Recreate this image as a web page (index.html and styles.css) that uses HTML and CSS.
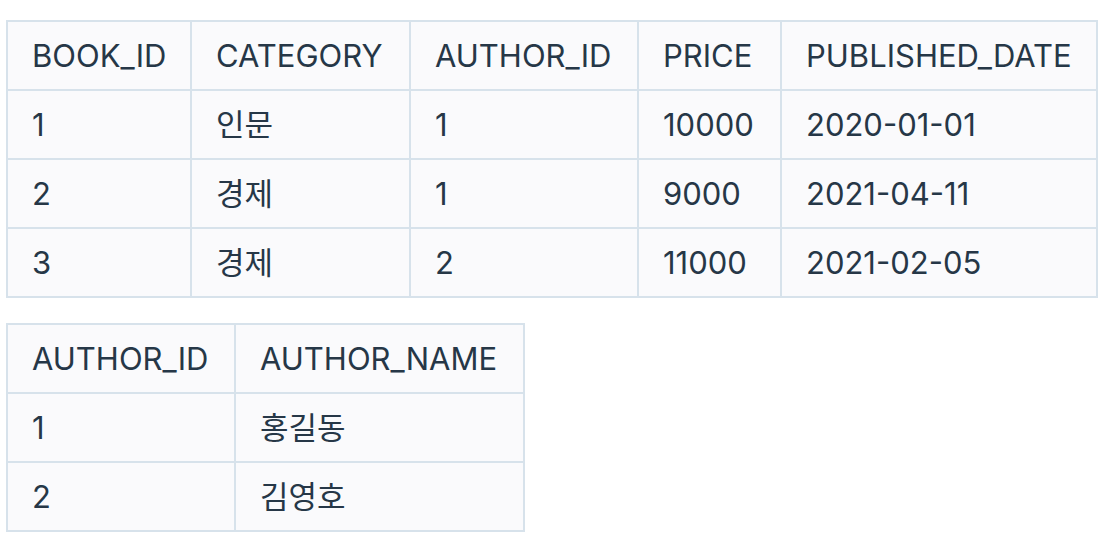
FILE: index.html
```html
<!DOCTYPE html>
<html lang="ko">
<head>
<meta charset="utf-8">
<link rel="stylesheet" href="styles.css">
</head>
<body>
<div class="page">
  <table class="grid grid-books">
    <colgroup>
      <col class="c-bookid"><col class="c-category"><col class="c-authorid"><col class="c-price"><col class="c-date">
    </colgroup>
    <thead>
      <tr><th>BOOK_ID</th><th>CATEGORY</th><th>AUTHOR_ID</th><th>PRICE</th><th>PUBLISHED_DATE</th></tr>
    </thead>
    <tbody>
      <tr><td>1</td><td>인문</td><td>1</td><td>10000</td><td>2020-01-01</td></tr>
      <tr><td>2</td><td>경제</td><td>1</td><td>9000</td><td>2021-04-11</td></tr>
      <tr><td>3</td><td>경제</td><td>2</td><td>11000</td><td>2021-02-05</td></tr>
    </tbody>
  </table>
  <table class="grid grid-authors">
    <colgroup>
      <col class="c-aid"><col class="c-aname">
    </colgroup>
    <thead>
      <tr><th>AUTHOR_ID</th><th>AUTHOR_NAME</th></tr>
    </thead>
    <tbody>
      <tr><td>1</td><td>홍길동</td></tr>
      <tr><td>2</td><td>김영호</td></tr>
    </tbody>
  </table>
</div>
</body>
</html>
```

FILE: styles.css
```css
html, body {
  margin: 0;
  padding: 0;
  background: #ffffff;
}

.page {
  padding: 20px 0 0 6px;
  display: flex;
  flex-direction: column;
  align-items: flex-start;
  gap: 25px;
  font-family: "Inter", "Noto Sans CJK KR", sans-serif;
  color: #263747;
}

.grid {
  border-collapse: collapse;
  table-layout: fixed;
  border: 2px solid #d7e2eb;
}

.grid th,
.grid td {
  border: 2px solid #d7e2eb;
  background: #fafafc;
  padding: 0 0 0 24px;
  height: 69px;
  box-sizing: border-box;
  text-align: left;
  font-weight: 400;
  font-size: 31px;
  line-height: 40px;
  white-space: nowrap;
  vertical-align: middle;
}

.grid-books { width: 1090px; }
.c-bookid { width: 184px; }
.c-category { width: 219px; }
.c-authorid { width: 228px; }
.c-price { width: 143px; }
.c-date { width: 316px; }

.grid-authors { width: 517px; }
.c-aid { width: 228px; }
.c-aname { width: 289px; }
```
